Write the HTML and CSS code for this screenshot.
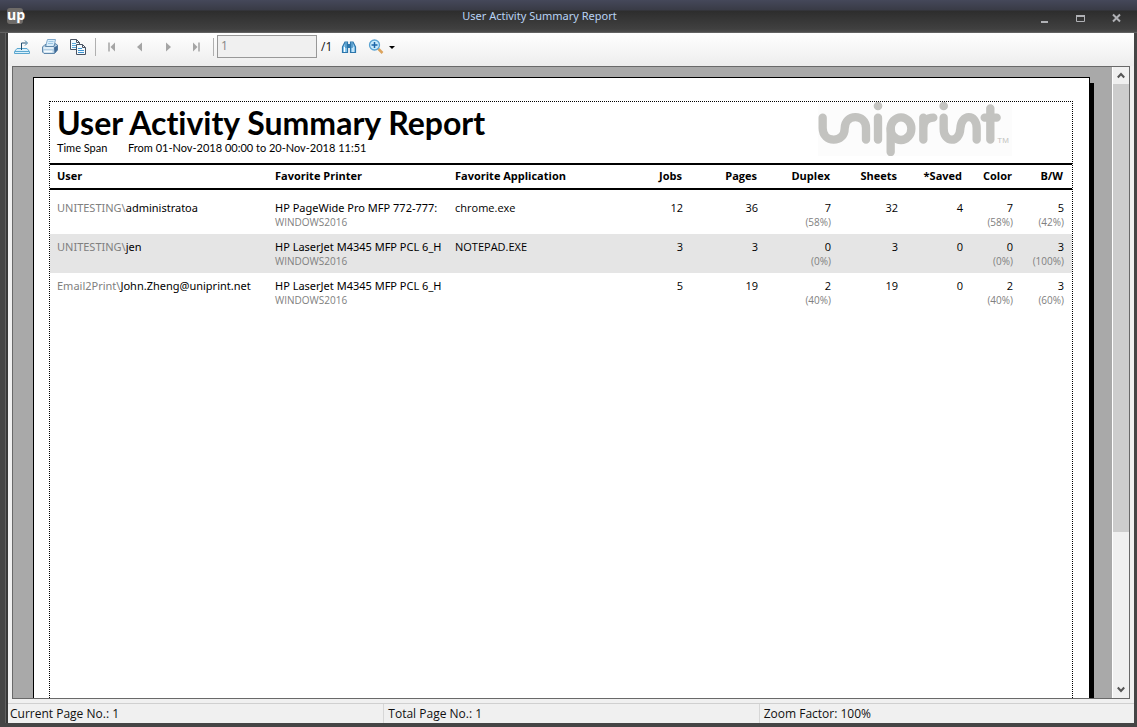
FILE: index.html
```html
<!DOCTYPE html>
<html lang="en">
<head>
<meta charset="utf-8">
<title>User Activity Summary Report</title>
<link rel="stylesheet" href="styles.css">
</head>
<body>
<div class="window">
  <header class="titlebar">
    <span class="app-icon">up</span>
    <h1 class="window-title">User Activity Summary Report</h1>
    <div class="window-controls">
      <button type="button" aria-label="Minimize"><svg width="10" height="12" viewBox="0 0 10 12"><path d="M1 10h7" stroke="#b0b1b5" stroke-width="2"/></svg></button>
      <button type="button" aria-label="Maximize"><svg width="10" height="12" viewBox="0 0 10 12"><path d="M.5 3.500h8v6h-8z" fill="none" stroke="#b0b1b5"/><path d="M0 4h9" stroke="#b0b1b5" stroke-width="2"/></svg></button>
      <button type="button" aria-label="Close"><svg width="10" height="12" viewBox="0 0 10 12"><path d="M1 2.500l7 7m0-7l-7 7" stroke="#b0b1b5" stroke-width="2"/></svg></button>
    </div>
  </header>
  <main class="client">
    <div class="toolbar">
      <button type="button" class="tool" aria-label="Export"><svg width="18" height="18" viewBox="0 0 18 18"><path d="M4 10.500h10l2.500 3v2H1.500v-2z" fill="#d9f0fb" stroke="#5aa6cf"/><path d="M2 13.500h14" stroke="#5aa6cf"/><path d="M8.500 12V5h5" fill="none" stroke="#1f4f73"/><path d="M12 2.500L14.500 5 12 7.500" fill="none" stroke="#3a7ca3"/></svg></button>
      <button type="button" class="tool" aria-label="Print"><svg width="18" height="18" viewBox="0 0 18 18"><path d="M4.500 8.500L6.500 1.500h8L13 8.500z" fill="#d8edfa" stroke="#7fa8cb"/><path d="M7.500 3.500h5M7 5.500h5" stroke="#9cc6e4"/><path d="M1.500 9L4 6.500h1L4.500 8.500H13l1-3 2.500 1.500v5L13.500 15.500H3L1.500 14z" fill="#b4cfe4" stroke="#5f87ab"/><path d="M13 9.500l3.500-2v4.500l-3 3.500z" fill="#3f6a96"/><path d="M2.500 10h10" stroke="#eef7fd" stroke-width="1.500"/><path d="M3 13.500h8.500" stroke="#f5fbff" stroke-width="2"/></svg></button>
      <button type="button" class="tool" aria-label="Copy"><svg width="18" height="18" viewBox="0 0 18 18"><path d="M1.500 1.500h6l3 3v7h-9z" fill="#f6fbff" stroke="#4a5362"/><path d="M7.500 1.500v3h3" fill="none" stroke="#4a5362"/><path d="M3 5.500h4M3 7.500h5M3 9.500h4" stroke="#5aa9dc"/><path d="M7.500 6.500h6l3 3v7h-9z" fill="#f6fbff" stroke="#4a5362"/><path d="M13.500 6.500v3h3" fill="none" stroke="#4a5362"/><path d="M9 10.500h4M9 12.500h6M9 14.500h6" stroke="#3f93d0"/></svg></button>
      <span class="divider"></span>
      <button type="button" class="nav" aria-label="First page" disabled><svg width="8" height="10" viewBox="0 0 8 10"><path d="M1 .5v9" stroke="#a5a5a5" stroke-width="1.500"/><path d="M7 .5v9L2.500 5z" fill="#a5a5a5"/></svg></button>
      <button type="button" class="nav" aria-label="Previous page" disabled><svg width="8" height="10" viewBox="0 0 8 10"><path d="M6 .5v9L1 5z" fill="#a5a5a5"/></svg></button>
      <button type="button" class="nav" aria-label="Next page" disabled><svg width="8" height="10" viewBox="0 0 8 10"><path d="M2 .5v9L7 5z" fill="#a5a5a5"/></svg></button>
      <button type="button" class="nav" aria-label="Last page" disabled><svg width="8" height="10" viewBox="0 0 8 10"><path d="M7 .5v9" stroke="#a5a5a5" stroke-width="1.500"/><path d="M1 .5v9L5.500 5z" fill="#a5a5a5"/></svg></button>
      <span class="divider"></span>
      <input class="page-input" type="text" value="1" aria-label="Page number" disabled>
      <span class="page-count">/1</span>
      <button type="button" class="tool find" aria-label="Find"><svg width="16" height="16" viewBox="0 0 16 16"><path d="M1.500 13.500V8l2.500-5h2.500v10.500zM9.500 13.500V3H12l2.500 5v5.500z" fill="#8ecbf0" stroke="#2d76ab" stroke-width="1.200"/><path d="M6.500 5h3v4h-3z" fill="#2d76ab"/><path d="M3.500 8v5M12 8v5" stroke="#fff"/><path d="M5 4v5M11 4v5" stroke="#2d76ab"/></svg></button>
      <button type="button" class="tool zoom" aria-label="Zoom"><svg width="28" height="16" viewBox="0 0 28 16"><path d="M10 9.500l4.500 4.500" stroke="#dca35c" stroke-width="2.500"/><circle cx="6.500" cy="6" r="5" fill="#c9ebfb" stroke="#5aa3d2" stroke-width="1.300"/><path d="M3.500 6h6m-3-3v6" stroke="#1c66a8" stroke-width="1.500"/><path d="M21 7h6l-3 3z" fill="#000"/></svg></button>
    </div>
    <div class="viewer">
      <div class="canvas">
        <article class="sheet">
          <div class="report">
            <header class="report-head">
              <div class="heading">
                <h2>User Activity Summary Report</h2>
                <p class="span"><span class="span-label">Time Span</span><span>From 01-Nov-2018 00:00 to 20-Nov-2018 11:51</span></p>
              </div>
              <svg class="logo" width="194" height="54" viewBox="0 0 582 162" role="img" aria-label="uniprint">
                <path fill="#fcfcfc" d="M0 0h582v162H0z"/>
                <g fill="none" stroke="#c3c3c0" stroke-width="25" stroke-linecap="round">
                  <path d="M14 47V78C14 124 80 124 80 80C80 34 144 34 144 78V113"/>
                  <path d="M180 47V113"/>
                  <path d="M218 150V80"/>
                  <ellipse cx="249" cy="80" rx="31" ry="34"/>
                  <path d="M316 113V47M316 78C316 58 327 47 346 47"/>
                  <path d="M377 47V80C377 124 425 124 427 80C429 34 476 34 476 78V113"/>
                  <path d="M517 19V113M500 47H536"/>
                </g>
                <circle cx="180" cy="12" r="13" fill="#c3c3c0"/>
                <circle cx="377" cy="12" r="13" fill="#c3c3c0"/>
                <text x="538" y="124" class="tm">TM</text>
              </svg>
            </header>
            <table>
              <colgroup><col class="c-user"><col class="c-printer"><col class="c-app"><col class="c-jobs"><col class="c-pages"><col class="c-duplex"><col class="c-sheets"><col class="c-saved"><col class="c-color"><col class="c-bw"></colgroup>
              <thead>
                <tr><th>User</th><th>Favorite Printer</th><th>Favorite Application</th><th class="num">Jobs</th><th class="num">Pages</th><th class="num">Duplex</th><th class="num">Sheets</th><th class="num">*Saved</th><th class="num">Color</th><th class="num">B/W</th></tr>
              </thead>
              <tbody>
                <tr><td class="user"><span class="domain">UNITESTING\</span>administratoa</td><td class="printer">HP PageWide Pro MFP 772-777:<small>WINDOWS2016</small></td><td>chrome.exe</td><td class="num">12</td><td class="num">36</td><td class="num">7<small>(58%)</small></td><td class="num">32</td><td class="num">4</td><td class="num">7<small>(58%)</small></td><td class="num">5<small>(42%)</small></td></tr>
                <tr><td class="user"><span class="domain">UNITESTING\</span>jen</td><td class="printer">HP LaserJet M4345 MFP PCL 6_H<small>WINDOWS2016</small></td><td>NOTEPAD.EXE</td><td class="num">3</td><td class="num">3</td><td class="num">0<small>(0%)</small></td><td class="num">3</td><td class="num">0</td><td class="num">0<small>(0%)</small></td><td class="num">3<small>(100%)</small></td></tr>
                <tr><td class="user"><span class="domain">Email2Print\</span>John.Zheng@uniprint.net</td><td class="printer">HP LaserJet M4345 MFP PCL 6_H<small>WINDOWS2016</small></td><td></td><td class="num">5</td><td class="num">19</td><td class="num">2<small>(40%)</small></td><td class="num">19</td><td class="num">0</td><td class="num">2<small>(40%)</small></td><td class="num">3<small>(60%)</small></td></tr>
              </tbody>
            </table>
          </div>
        </article>
      </div>
      <div class="scrollbar">
        <button type="button" aria-label="Scroll up"><svg width="8" height="7" viewBox="0 0 8 7"><path d="M.8 5.500L4 2l3.200 3.500" fill="none" stroke="#555" stroke-width="2"/></svg></button>
        <div class="track"><div class="thumb"></div></div>
        <button type="button" aria-label="Scroll down"><svg width="8" height="7" viewBox="0 0 8 7"><path d="M.8 1.500L4 5l3.200-3.500" fill="none" stroke="#555" stroke-width="2"/></svg></button>
      </div>
    </div>
    <footer class="status"><span>Current Page No.: 1</span><span>Total Page No.: 1</span><span>Zoom Factor: 100%</span></footer>
  </main>
</div>
</body>
</html>
```
FILE: styles.css
```css
* { box-sizing: border-box; }
body { margin: 0; font: 12px/16px "Open Sans", "Noto Sans", sans-serif; color: #111; }
button { padding: 0; border: 0; background: none; display: flex; align-items: center; justify-content: center; }
h1, h2, p { margin: 0; }
svg { display: block; }

.window { height: 100vh; display: flex; flex-direction: column; background: #454545; }
.titlebar { height: 33px; flex: none; display: flex; align-items: center; padding: 0 15px 1px 7px; background: linear-gradient(#45485a 0, #393b46 10px, #2d2d2d 11px, #404040 29px, #4c4c4c 32px, #777 33px); }
.app-icon { width: 16px; height: 16px; border-radius: 3px; background: #6e6b68; color: #fff; font: bold 14px/13px "Open Sans", sans-serif; text-align: center; }
.window-title { flex: 1; padding-left: 16px; text-align: center; font: 11px/16px "Noto Sans", sans-serif; color: #b9d3f5; }
.window-controls { display: flex; gap: 26px; padding-top: 4px; }

.client { flex: 1; min-height: 0; display: flex; flex-direction: column; margin: 0 3px 4px 8px; background: #f0f0f0; box-shadow: -2px 0 0 #383838, -3px 0 0 #606060; }
.toolbar { height: 33px; flex: none; display: flex; align-items: center; padding: 0 5px 6px; background: linear-gradient(#fff, #ededed); }
.tool { width: 18px; height: 18px; margin-right: 10px; }
.divider { width: 1px; height: 18px; background: #b0b0b0; margin-right: 10px; }
.tool + .divider { margin-left: -2px; }
.nav { width: 12px; height: 18px; margin-right: 16px; }
.nav + .divider { margin: 0 3px 0 -5px; }
.page-input { width: 100px; height: 23px; padding: 0 3px 2px; border: 1px solid #989898; background: #f0f0f0; color: #858585; font: 12px "Open Sans", sans-serif; }
.page-count { margin: 0 8px 0 4px; }
.zoom { width: 28px; }

.viewer { flex: 1; min-height: 0; display: flex; margin: 0 4px; border: 1px solid #696969; background: #a9a9a9; }
.canvas { flex: 1; min-width: 0; overflow: hidden; display: flex; padding: 10px 22px 0 20px; }
.sheet { flex: 1; min-width: 0; border: 1px solid #000; border-bottom: 0; background: #fff; box-shadow: 4px 6px 0 #000; padding: 23px 16px 0 15px; display: flex; }
.report { flex: 1; min-width: 0; border: 1px dotted #000; border-bottom: 0; font: 11px/14px "Open Sans", "Noto Sans", sans-serif; color: #000; }
.report-head { height: 61px; display: flex; justify-content: space-between; padding: 0 60px 0 7px; }
h2 { font: bold 32px/36px Lato, sans-serif; font-variant-ligatures: none; padding-top: 3px; }
.span { display: flex; font-family: Lato, sans-serif; }
.span-label { width: 71px; }
.tm { font: 24px "Liberation Sans", sans-serif; fill: #c3c3c0; }

table { width: 100%; table-layout: fixed; border-collapse: separate; border-spacing: 0; }
.c-user { width: 218px; }
.c-printer { width: 180px; }
.c-jobs { width: 60px; }
.c-pages { width: 75px; }
.c-duplex { width: 73px; }
.c-sheets { width: 67px; }
.c-saved { width: 65px; }
.c-color { width: 50px; }
.c-bw { width: 51px; }
th { height: 27px; padding: 0 0 2px 7px; border-top: 2px solid #000; border-bottom: 2px solid #000; text-align: left; font-weight: 700; }
td { padding: 6px 0 5px 7px; vertical-align: top; white-space: nowrap; }
tbody tr:first-child td { padding-top: 11px; }
tbody tr:nth-child(even) { background: #e5e5e5; }
.user, .printer { font-family: "Noto Sans", sans-serif; }
.num { text-align: right; padding-left: 0; padding-right: 8px; }
th.num { padding-right: 9px; }
.domain { color: #808080; }
small { display: block; font: 10px/14px "Open Sans", sans-serif; color: #808080; }

.scrollbar { width: 17px; flex: none; display: flex; flex-direction: column; background: #f0f0f0; border-left: 1px solid #fff; }
.scrollbar button { height: 17px; }
.track { flex: 1; }
.thumb { height: 75%; background: #cdcdcd; }

.status { flex: none; display: grid; grid-template-columns: 1fr 1fr 1fr; margin-top: 4px; border-top: 1px solid #d0d0d0; line-height: 18px; }
.status span { padding: 1px 0 0 2px; }
.status span + span { border-left: 1px solid #d7d7d7; padding-left: 4px; }
```
